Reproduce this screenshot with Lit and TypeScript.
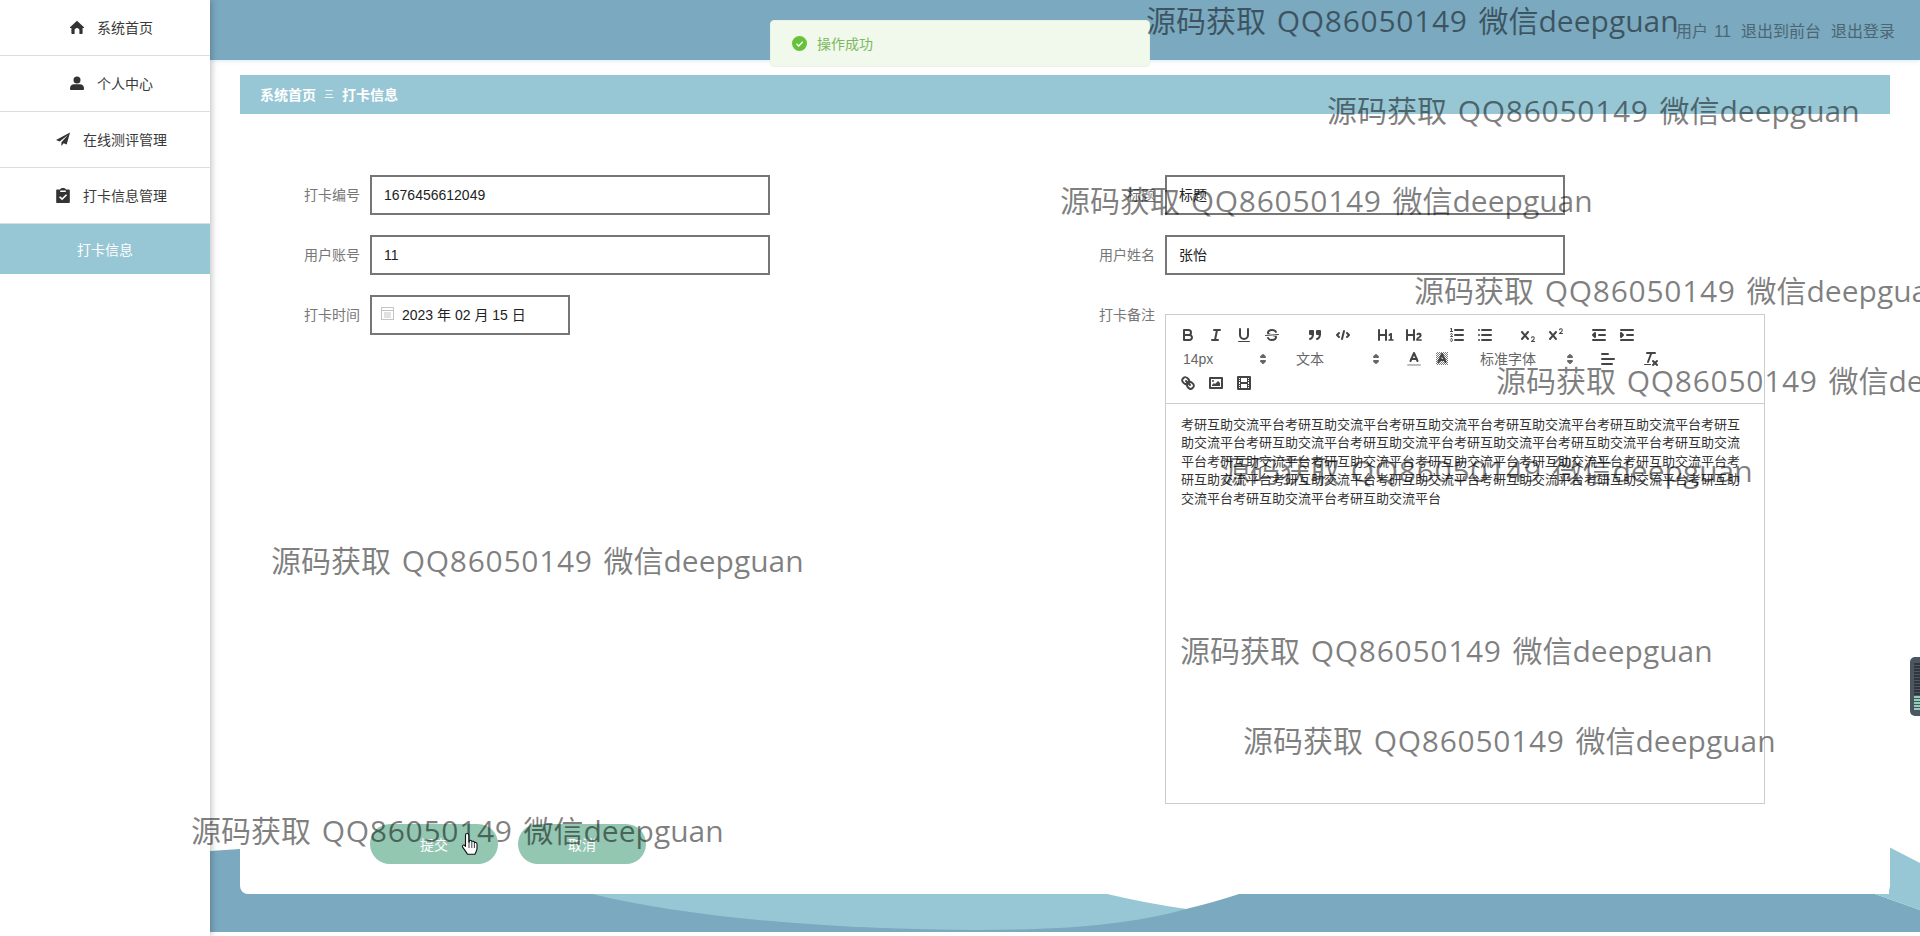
import { LitElement, html, css, svg } from "lit";
import { customElement } from "lit/decorators.js";

const MARKS: [number, number][] = [
  [1146, 0], [1327, 90], [1060, 180], [1414, 270], [1496, 360],
  [1220, 450], [271, 540], [1180, 630], [1243, 720], [191, 810],
];
const ln = (x1: number, y1: number, x2: number, y2: number) =>
  svg`<line x1=${x1} y1=${y1} x2=${x2} y2=${y2}></line>`;
const X_PATH = "M9.651,5.241a1,1,0,0,0-1.41.108L6,7.964,3.759,5.349A1,1,0,1,0,2.242,6.651L4.684,9.5,2.242,12.349a1,1,0,0,0,1.517,1.3L6,11.036l2.241,2.615a1,1,0,0,0,1.517-1.3L7.316,9.5,9.759,6.651A1,1,0,0,0,9.651,5.241Z";

const ICONS = {
  bold: svg`<path d="M5,4H9.5A2.5,2.5,0,0,1,12,6.5v0A2.5,2.5,0,0,1,9.5,9H5A0,0,0,0,1,5,9V4A0,0,0,0,1,5,4Z"></path><path d="M5,9h5.5A2.5,2.5,0,0,1,13,11.5v0A2.5,2.5,0,0,1,10.5,14H5a0,0,0,0,1,0,0V9A0,0,0,0,1,5,9Z"></path>`,
  italic: svg`${ln(7, 4, 13, 4)}${ln(5, 14, 11, 14)}${ln(8, 14, 10, 4)}`,
  underline: svg`<path d="M5,3V9a4.012,4.012,0,0,0,4,4H9a4.012,4.012,0,0,0,4-4V3"></path><rect class="f" height="1" rx="0.5" ry="0.5" width="12" x="3" y="15"></rect>`,
  strike: svg`<line class="thin" x1="15.5" x2="2.5" y1="8.5" y2="9.5"></line><path class="f" d="M9.007,8C6.542,7.791,6,7.519,6,6.5,6,5.792,7.283,5,9,5c1.571,0,2.765.679,2.969,1.309a1,1,0,0,0,1.9-.617C13.356,4.106,11.354,3,9,3,6.2,3,4,4.538,4,6.5a3.2,3.2,0,0,0,.5,1.843Z"></path><path class="f" d="M8.984,10C11.457,10.208,12,10.479,12,11.5c0,.708-1.283,1.5-3,1.5-1.571,0-2.765-.679-2.969-1.309a1,1,0,1,0-1.9.617C4.644,13.894,6.646,15,9,15c2.8,0,5-1.538,5-3.5a3.2,3.2,0,0,0-.5-1.843Z"></path>`,
  quote: svg`<rect class="fs" height="3" width="3" x="4" y="5"></rect><rect class="fs" height="3" width="3" x="11" y="5"></rect><path d="M7,8c0,4.031-3,5-3,5"></path><path d="M14,8c0,4.031-3,5-3,5"></path>`,
  code: svg`<polyline points="5 7 3 9 5 11"></polyline><polyline points="13 7 15 9 13 11"></polyline>${ln(10, 5, 8, 13)}`,
  h1: svg`<path class="f" d="M10,4V14a1,1,0,0,1-2,0V10H3v4a1,1,0,0,1-2,0V4A1,1,0,0,1,3,4V8H8V4a1,1,0,0,1,2,0Zm6.06787,9.209H14.98975V7.59863a.54085.54085,0,0,0-.605-.60547h-.62744a1.01119,1.01119,0,0,0-.748.29688L11.645,8.56641a.5435.5435,0,0,0-.022.8584l.28613.30762a.53861.53861,0,0,0,.84717.0332l.09912-.08789a1.2137,1.2137,0,0,0,.2417-.35254h.02246s-.01123.30859-.01123.60547V13.209H12.041a.54085.54085,0,0,0-.605.60547v.43945a.54085.54085,0,0,0,.605.60547h4.02686a.54085.54085,0,0,0,.605-.60547v-.43945A.54085.54085,0,0,0,16.06787,13.209Z"></path>`,
  h2: svg`<path class="f" d="M16.73975,13.81445v.43945a.54085.54085,0,0,1-.605.60547H11.855a.58392.58392,0,0,1-.64893-.60547V14.0127c0-2.90527,3.39941-3.42187,3.39941-4.55469a.77675.77675,0,0,0-.84717-.78125,1.17684,1.17684,0,0,0-.83594.38477c-.2749.26367-.561.374-.85791.13184l-.4292-.34082c-.30811-.24219-.38525-.51758-.1543-.81445a2.97155,2.97155,0,0,1,2.45361-1.17676,2.45393,2.45393,0,0,1,2.68408,2.40918c0,2.45312-3.1792,2.92676-3.27832,3.93848h2.79443A.54085.54085,0,0,1,16.73975,13.81445ZM9,3A.99974.99974,0,0,0,8,4V8H3V4A1,1,0,0,0,1,4V14a1,1,0,0,0,2,0V10H8v4a1,1,0,0,0,2,0V4A.99974.99974,0,0,0,9,3Z"></path>`,
  ol: svg`${ln(7, 4, 15, 4)}${ln(7, 9, 15, 9)}${ln(7, 14, 15, 14)}<line class="thin" x1="2.5" x2="4.5" y1="5.5" y2="5.5"></line><path class="f" d="M3.5,6A0.5,0.5,0,0,1,3,5.5V3.085l-0.276.138A0.5,0.5,0,0,1,2.053,3c-0.124-.247-0.023-0.324.224-0.447l1-.5A0.5,0.5,0,0,1,4,2.5v3A0.5,0.5,0,0,1,3.5,6Z"></path><path class="thin" d="M4.5,10.5h-2c0-.234,1.85-1.076,1.85-2.234A0.959,0.959,0,0,0,2.5,8.156"></path><path class="thin" d="M2.5,14.846a0.959,0.959,0,0,0,1.85-.109A0.7,0.7,0,0,0,3.75,14a0.688,0.688,0,0,0,.6-0.736,0.959,0.959,0,0,0-1.85-.109"></path>`,
  ul: svg`${ln(6, 4, 15, 4)}${ln(6, 9, 15, 9)}${ln(6, 14, 15, 14)}${ln(3, 4, 3, 4)}${ln(3, 9, 3, 9)}${ln(3, 14, 3, 14)}`,
  sub: svg`<path class="f" d="M15.5,15H13.861a3.858,3.858,0,0,0,1.914-2.975,1.8,1.8,0,0,0-1.6-1.751A1.921,1.921,0,0,0,12.021,11.7a0.50013,0.50013,0,1,0,.957.291h0a0.914,0.914,0,0,1,1.053-.725,0.81,0.81,0,0,1,.744.762c0,1.076-1.16971,1.86982-1.93971,2.43082A1.45639,1.45639,0,0,0,12,15.5a0.5,0.5,0,0,0,.5.5h3A0.5,0.5,0,0,0,15.5,15Z"></path><path class="f" d=${X_PATH}></path>`,
  sup: svg`<path class="f" d="M15.5,7H13.861a4.015,4.015,0,0,0,1.914-2.975,1.8,1.8,0,0,0-1.6-1.751A1.922,1.922,0,0,0,12.021,3.7a0.5,0.5,0,1,0,.957.291,0.917,0.917,0,0,1,1.053-.725,0.81,0.81,0,0,1,.744.762c0,1.077-1.164,1.925-1.934,2.486A1.423,1.423,0,0,0,12,7.5a0.5,0.5,0,0,0,.5.5h3A0.5,0.5,0,0,0,15.5,7Z"></path><path class="f" d=${X_PATH}></path>`,
  outdent: svg`${ln(3, 14, 15, 14)}${ln(3, 4, 15, 4)}${ln(9, 9, 15, 9)}<polyline class="fs" points="5 7 5 11 3 9 5 7"></polyline>`,
  indent: svg`${ln(3, 14, 15, 14)}${ln(3, 4, 15, 4)}${ln(9, 9, 15, 9)}<polyline class="fs" points="3 7 3 11 5 9 3 7"></polyline>`,
  color: svg`<line class="label" x1="3" x2="15" y1="15" y2="15"></line><polyline points="5.5 11 9 3 12.5 11"></polyline>${ln(11.63, 9, 6.38, 9)}`,
  bg: svg`<defs><pattern id="hatch" width="2" height="2" patternUnits="userSpaceOnUse"><rect class="f" width="1" height="1"></rect><rect class="f" x="1" y="1" width="1" height="1"></rect></pattern></defs><rect class="hatch" x="3" y="2" width="12" height="13"></rect><polyline points="5.5 12 9 4 12.5 12"></polyline>${ln(11.63, 10, 6.38, 10)}`,
  align: svg`${ln(3, 9, 15, 9)}${ln(3, 14, 13, 14)}${ln(3, 4, 9, 4)}`,
  clean: svg`${ln(5, 3, 13, 3)}${ln(6, 12, 9.35, 3)}${ln(11, 11, 15, 15)}${ln(15, 11, 11, 15)}<rect class="f" height="1" rx="0.5" ry="0.5" width="7" x="2" y="14"></rect>`,
  link: svg`${ln(7, 7, 11, 11)}<path d="M8.9,4.577a3.476,3.476,0,0,1,.36,4.679A3.476,3.476,0,0,1,4.577,8.9C3.185,7.5,2.035,6.4,4.217,4.217S7.5,3.185,8.9,4.577Z"></path><path d="M13.423,9.1a3.476,3.476,0,0,0-4.679-.36,3.476,3.476,0,0,0,.36,4.679c1.392,1.392,2.5,2.542,4.679.36S14.815,10.5,13.423,9.1Z"></path>`,
  image: svg`<rect height="10" width="12" x="3" y="4"></rect><circle class="f" cx="6" cy="7" r="1"></circle><polyline class="f" points="5 12 5 11 7 9 8 10 11 7 13 9 13 12 5 12"></polyline>`,
  video: svg`<rect height="12" width="12" x="3" y="3"></rect><rect class="f" height="12" width="1" x="5" y="3"></rect><rect class="f" height="12" width="1" x="12" y="3"></rect><rect class="f" height="2" width="8" x="5" y="8"></rect><rect class="f" height="1" width="3" x="3" y="5"></rect><rect class="f" height="1" width="3" x="3" y="7"></rect><rect class="f" height="1" width="3" x="3" y="10"></rect><rect class="f" height="1" width="3" x="3" y="12"></rect><rect class="f" height="1" width="3" x="12" y="5"></rect><rect class="f" height="1" width="3" x="12" y="7"></rect><rect class="f" height="1" width="3" x="12" y="10"></rect><rect class="f" height="1" width="3" x="12" y="12"></rect>`,
  arrows: svg`<polygon class="arrow" points="7 11 9 13 11 11 7 11"></polygon><polygon class="arrow" points="7 7 9 5 11 7 7 7"></polygon>`,
};

const NAV = [
  { label: "系统首页", icon: svg`<path d="M7 .8 14 7.2c.2.3 0 .7-.4.7h-1v5.300c0 .4-.3.8-.8.8H9.400V10.200C9.400 9 8.400 8 7 8S4.600 9 4.600 10.200V14H2.200c-.5 0-.8-.4-.8-.8V7.900h-1c-.4 0-.6-.4-.4-.7L7 .8Z"></path>` },
  { label: "个人中心", icon: svg`<circle cx="7" cy="4" r="3.500"></circle><path d="M0 12.200c0-2.400 2-3.900 4-3.900h6c2 0 4 1.500 4 3.900v.8c0 .7-.5 1.100-1.200 1.100H1.200C.5 14.100 0 13.700 0 13v-.8Z"></path>` },
  { label: "在线测评管理", icon: svg`<path d="M14 .6 0 8l3.600 1.500L12 3 5.400 10.200v3.900l2.300-2.900 3 1.300L14 .6Z"></path>` },
  { label: "打卡信息管理", icon: svg`<path fill-rule="evenodd" d="M1.200 1.600H4C4.200.7 5.500 0 7 0s2.800.7 3 1.600h2.800c.6 0 1 .4 1 1V14c0 .6-.4 1-1 1H1.200c-.6 0-1-.4-1-1V2.600c0-.6.4-1 1-1ZM4.200 2.600v1.300h5.600V2.600H4.200ZM3 9.200l3.100 3 5-5-1.100-1-3.900 3.900-2-1.900-1.100 1Z"></path>` },
];

@customElement("app-root")
export class AppRoot extends LitElement {
  static styles = css`
    :host {
      display: block;
      width: 1920px;
      height: 936px;
      position: relative;
      overflow: hidden;
      background: #fff;
      font-family: "Liberation Sans", "Noto Sans CJK SC", sans-serif;
      font-size: 14px;
      color: #333;
    }
    .shell { display: flex; height: 100%; }
    .side {
      width: 210px;
      flex: none;
      background: #fff;
      box-shadow: 1px 0 7px rgba(0, 0, 0, 0.28);
      position: relative;
      z-index: 3;
    }
    .nav-item {
      height: 55px;
      box-sizing: content-box;
      border-bottom: 1px solid #dcdcdc;
      display: flex;
      align-items: center;
      justify-content: center;
      gap: 13px;
      color: #3a3a3a;
      padding-left: 13px;
      height: 55px;
    }
    .nav-item span { margin-top: -1px; }
    .nav-item svg { width: 14px; height: 15px; fill: #333; flex: none; }
    .nav-active {
      height: 50px;
      background: #97c6d5;
      color: #fff;
      display: flex;
      align-items: center;
      justify-content: center;
      padding-bottom: 1px;
      box-sizing: border-box;
    }
    .main { flex: 1; display: flex; flex-direction: column; position: relative; min-width: 0; }
    .wave { position: absolute; left: 0; top: 0; width: 1710px; height: 936px; }
    .top {
      height: 60px;
      flex: none;
      box-sizing: border-box;
      background: #7aa9c0;
      display: flex;
      justify-content: flex-end;
      align-items: center;
      gap: 10px;
      padding: 0 25px 1px 0;
      font-size: 16px;
      color: #4e6572;
      position: relative;
      box-shadow: 0 1px 4px rgba(122, 169, 192, 0.25);
    }
    .top .me { word-spacing: 2px; }
    .card {
      position: relative;
      margin: 15px 30px 0;
      height: 819px;
      background: #fff;
      border-radius: 0 0 8px 8px;
    }
    .crumb {
      height: 39px;
      box-sizing: border-box;
      background: #97c6d5;
      color: #fff;
      display: flex;
      align-items: center;
      padding: 0 0 2px 20px;
      font-weight: 700;
    }
    .crumb .sep { margin: 0 8px; font-weight: 400; width: 10px; font-size: 10px; text-align: center; }
    .form { padding-top: 61px; }
    .cols { display: flex; height: 629px; }
    .col { width: 795px; display: flex; flex-direction: column; gap: 20px; }
    .row { display: flex; gap: 10px; }
    .lab {
      width: 120px;
      height: 40px;
      line-height: 40px;
      text-align: right;
      color: #777;
      flex: none;
    }
    .inp {
      width: 400px;
      height: 40px;
      box-sizing: border-box;
      border: 2px solid #767676;
      padding: 0 12px;
      line-height: 36px;
      color: #222;
      background: #fff;
    }
    .date {
      width: 200px;
      display: flex;
      align-items: center;
      gap: 8px;
      padding: 0 9px;
    }
    .date svg { width: 13px; height: 13px; flex: none; margin-top: -3px; }
    .editor {
      width: 600px;
      height: 490px;
      box-sizing: border-box;
      margin-top: 19px;
      border: 1px solid #ccc;
      display: flex;
      flex-direction: column;
    }
    .bar {
      display: flex;
      flex-wrap: wrap;
      padding: 8px;
      border-bottom: 1px solid #ccc;
      flex: none;
    }
    .grp { display: flex; margin-right: 15px; height: 24px; }
    .btn { width: 28px; height: 24px; display: flex; align-items: center; justify-content: center; }
    .bar svg { width: 18px; height: 18px; fill: none; stroke: #444; stroke-width: 2; stroke-linecap: round; stroke-linejoin: round; display: block; }
    .bar svg .f { fill: #444; stroke: none; }
    .bar svg .fs { fill: #444; }
    .bar svg .thin { stroke-width: 1; }
    .bar svg .label { stroke: #444; opacity: 0.35; }
    .bar svg .hatch { fill: url(#hatch); stroke: none; opacity: 0.7; }
    .bar svg .arrow { stroke: #666; fill: #666; stroke-width: 2; }
    .pick {
      position: relative;
      width: 98px;
      height: 24px;
      line-height: 24px;
      padding-left: 9px;
      box-sizing: border-box;
      color: #666;
      font-size: 14px;
    }
    .pick.font { width: 108px; }
    .pick svg { position: absolute; right: 0; top: 3px; }
    .content {
      padding: 12px 15px;
      font-size: 13px;
      line-height: 1.42;
      color: #333;
      word-break: break-all;
    }
    .btns { display: flex; gap: 20px; padding: 20px 0 0 130px; }
    .sub {
      width: 128px;
      height: 40px;
      border-radius: 20px;
      background: #93c7b2;
      color: #fff;
      display: flex;
      align-items: center;
      justify-content: center;
    }
    .toast {
      position: absolute;
      left: 770px;
      top: 20px;
      width: 380px;
      height: 47px;
      box-sizing: border-box;
      background: #f0f9eb;
      border: 1px solid #e8f4e0;
      border-radius: 4px;
      display: flex;
      align-items: center;
      gap: 10px;
      padding: 0 0 1px 21px;
      color: #7cb860;
      z-index: 5;
    }
    .toast svg { width: 15px; height: 15px; }
    .mark {
      position: absolute;
      font-family: "Open Sans", "Noto Sans CJK SC", sans-serif;
      font-size: 30px;
      line-height: 42px;
      white-space: nowrap;
      word-spacing: 3px;
      color: rgba(0, 0, 0, 0.5);
      z-index: 6;
    }
    .mark b { font-weight: 400; letter-spacing: 0.7px; }
    .tab {
      position: absolute;
      left: 1910px;
      top: 657px;
      width: 14px;
      height: 59px;
      border-radius: 5px;
      background: #4c5660;
      z-index: 6;
      display: flex;
      flex-direction: column;
      gap: 1px;
      padding: 6px 0 0 4px;
      box-sizing: border-box;
    }
    .tab span { width: 10px; height: 2px; background: #2f363d; flex: none; }
    .tab span.on { background: #8fd0bc; }
    .cursor { position: absolute; left: 461px; top: 832px; width: 19px; height: 24px; z-index: 7; }
  `;

  private icon(name: keyof typeof ICONS) {
    return html`<span class="btn"><svg viewBox="0 0 18 18">${ICONS[name]}</svg></span>`;
  }

  private picker(label: string, cls = "") {
    return html`<span class="pick ${cls}">${label}<svg viewBox="0 0 18 18">${ICONS.arrows}</svg></span>`;
  }

  render() {
    const groups: (keyof typeof ICONS)[][] = [
      ["bold", "italic", "underline", "strike"],
      ["quote", "code"],
      ["h1", "h2"],
      ["ol", "ul"],
      ["sub", "sup"],
      ["outdent", "indent"],
    ];
    const bars = Array.from({ length: 16 }, (_, i) => i);
    return html`
      <div class="shell">
        <aside class="side">
          ${NAV.map(
            (n) => html`<div class="nav-item"><svg viewBox="0 0 14 15">${n.icon}</svg><span>${n.label}</span></div>`
          )}
          <div class="nav-active">打卡信息</div>
        </aside>
        <div class="main">
          <svg class="wave" viewBox="210 0 1710 936">
            <path fill="#7aa9c0" d="M210 851 240 849 900 840 1875 894 1920 910V932H210Z"></path>
            <path fill="#97c6d5" d="M592 894C700 920 850 930 978 930 1060 930 1130 925 1186 909L1107 894Z"></path>
            <path fill="#fff" d="M1107 894Q1145 903 1186 909 1215 902 1239 894Z"></path>
            <path fill="#97c6d5" d="M1889 847 1920 863V910L1875 894H1889Z"></path>
          </svg>
          <header class="top">
            <span class="me">用户 11</span><span>退出到前台</span><span>退出登录</span>
          </header>
          <section class="card">
            <div class="crumb"><span>系统首页</span><span class="sep">三</span><span>打卡信息</span></div>
            <div class="form">
              <div class="cols">
                <div class="col">
                  <div class="row"><span class="lab">打卡编号</span><div class="inp">1676456612049</div></div>
                  <div class="row"><span class="lab">用户账号</span><div class="inp">11</div></div>
                  <div class="row">
                    <span class="lab">打卡时间</span>
                    <div class="inp date">
                      <svg viewBox="0 0 13 13" fill="none" stroke="#c4c4c4">
                        <rect x=".5" y=".5" width="12" height="12"></rect>
                        <path d="M.5 3.500h12M3 6h7M3 8h7M3 10h7"></path>
                      </svg>
                      <span>2023 年 02 月 15 日</span>
                    </div>
                  </div>
                </div>
                <div class="col">
                  <div class="row"><span class="lab">标题</span><div class="inp">标题</div></div>
                  <div class="row"><span class="lab">用户姓名</span><div class="inp">张怡</div></div>
                  <div class="row">
                    <span class="lab">打卡备注</span>
                    <div class="editor">
                      <div class="bar">
                        ${groups.map((g) => html`<span class="grp">${g.map((i) => this.icon(i))}</span>`)}
                        <span class="grp">${this.picker("14px")}</span>
                        <span class="grp">${this.picker("文本")}</span>
                        <span class="grp">${this.icon("color")}${this.icon("bg")}</span>
                        <span class="grp">${this.picker("标准字体", "font")}</span>
                        <span class="grp">${this.icon("align")}</span>
                        <span class="grp">${this.icon("clean")}</span>
                        <span class="grp">${this.icon("link")}${this.icon("image")}${this.icon("video")}</span>
                      </div>
                      <div class="content">${"考研互助交流平台".repeat(24)}</div>
                    </div>
                  </div>
                </div>
              </div>
              <div class="btns">
                <div class="sub">提交</div>
                <div class="sub">取消</div>
              </div>
            </div>
          </section>
        </div>
      </div>
      <div class="toast">
        <svg viewBox="0 0 15 15">
          <circle cx="7.500" cy="7.500" r="7.500" fill="#67c23a"></circle>
          <path d="M4.500 7.800 6.700 10 10.800 5.700" fill="none" stroke="#fff" stroke-width="1.300"></path>
        </svg>
        <span>操作成功</span>
      </div>
      ${MARKS.map(
        ([x, y]) =>
          html`<div class="mark" style="left:${x}px;top:${y}px">源码获取 <b>QQ86050149</b> 微信deepguan</div>`
      )}
      <div class="tab">
        ${bars.map((i) => html`<span class=${i > 10 ? "on" : ""}></span>`)}
      </div>
      <svg class="cursor" viewBox="0 0 19 24">
        <path
          d="M6 1.500c1 0 1.800.8 1.800 1.800V10l.5-.1V8.500c1.400-.5 2.300.1 2.500 1 1.100-.6 2.300-.1 2.600 1 1.300-.5 2.600.2 2.600 1.700v4.300c0 2-1 3.300-2 5.800H6.500c-1-2-3-4.500-4.800-7.200-.9-1.500.7-2.700 1.800-1.800l1 1V3.300c0-1 .5-1.800 1.500-1.800Z"
          fill="#fff"
          stroke="#111"
          stroke-width="1.100"
          stroke-linejoin="round"
        ></path>
        <path d="M8 10v6M10.800 10v6M13.400 11v5" stroke="#111" stroke-width=".8" fill="none"></path>
      </svg>
    `;
  }
}
